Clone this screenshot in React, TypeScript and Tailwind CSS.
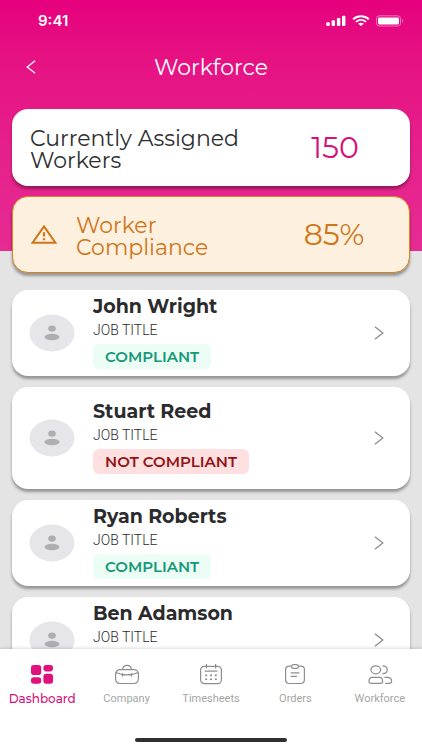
import React, { ReactNode } from "react";
import clsx from "clsx";

type Worker = {
  name: string;
  compliant: boolean;
  tall?: boolean;
};

const workers: Worker[] = [
  { name: "John Wright", compliant: true },
  { name: "Stuart Reed", compliant: false, tall: true },
  { name: "Ryan Roberts", compliant: true },
  { name: "Ben Adamson", compliant: true },
];

const SignalIcon = () => (
  <svg width="20" height="12" viewBox="0 0 20 12" fill="white">
    <rect x="0.3" y="7.3" width="3.4" height="3.7" rx="1" />
    <rect x="5.6" y="5.3" width="3.4" height="5.7" rx="1" />
    <rect x="10.9" y="3" width="3.4" height="8" rx="1" />
    <rect x="16" y="0.8" width="3.4" height="10.2" rx="1" />
  </svg>
);

const WifiIcon = () => (
  <svg width="18" height="12" viewBox="0 0 18 12" fill="none" stroke="white">
    <path d="M1.1 4.3C5.6 0.3 12.4 0.3 16.9 4.3" strokeWidth="2" />
    <path d="M4 6.9C6.9 4.3 11.1 4.3 14 6.9" strokeWidth="1.8" />
    <path d="M6.2 8.8C7.8 7.5 10.2 7.5 11.8 8.8L9 11Z" fill="white" stroke="none" />
  </svg>
);

const BatteryIcon = () => (
  <svg width="28" height="12" viewBox="0 0 28 12" fill="none">
    <rect x="0.5" y="0.8" width="24" height="10.2" rx="2.8" stroke="white" strokeOpacity="0.45" />
    <rect x="2" y="2.4" width="21" height="7" rx="1.4" fill="white" />
    <path d="M26 4.2C27.6 4.8 27.6 7 26 7.6Z" fill="white" fillOpacity="0.5" />
  </svg>
);

const ChevronIcon = ({ className }: { className?: string }) => (
  <svg
    className={className}
    width="10"
    height="14"
    viewBox="0 0 10 14"
    fill="none"
    stroke="currentColor"
    strokeWidth="1.3"
  >
    <path d="M0.9 0.7L8.8 7L0.9 13.3" />
  </svg>
);

const WarningIcon = () => (
  <svg width="28" height="20" viewBox="0 0 28 20" fill="none" stroke="#cf7618">
    <path d="M14 1.4L25.4 17.8H2.6Z" strokeWidth="2" strokeLinejoin="miter" />
    <path d="M14 7.2V11.4M14 13.2V15.2" strokeWidth="2.2" />
  </svg>
);

const DashboardIcon = () => (
  <svg width="24" height="22" viewBox="0 0 24 22" fill="#e0107c">
    <rect x="1" y="1" width="10.2" height="10" rx="2.8" />
    <rect x="13.4" y="1" width="9.6" height="6.4" rx="2.8" />
    <rect x="1" y="13.2" width="10.2" height="6.6" rx="2.8" />
    <rect x="13.4" y="9.8" width="9.6" height="10" rx="2.8" />
  </svg>
);

const CompanyIcon = () => (
  <svg width="26" height="22" viewBox="0 0 26 22" fill="none" stroke="#8e8e8e" strokeWidth="1.2">
    <rect x="1.6" y="5.7" width="22.8" height="13.8" rx="4.4" />
    <path d="M8.6 5.7C8.8 2.8 10.2 1.4 13 1.4S17.2 2.8 17.4 5.7" />
    <path d="M1.8 8.5C8 11.6 18 11.6 24.2 8.5M8.4 9.2V12.5M17.6 9.2V12.5" />
  </svg>
);

const TimesheetsIcon = () => (
  <svg width="26" height="22" viewBox="0 0 26 22" fill="none" stroke="#8e8e8e" strokeWidth="1.2">
    <rect x="2.6" y="2.3" width="20.8" height="17.3" rx="3.6" />
    <path d="M8.4 0V4.4M17.6 0V4.4M6.6 7.2H19.4" />
    <path
      d="M7.2 11.4H9.2M12 11.4H14M16.8 11.4H18.8M7.2 15.2H9.2M12 15.2H14M16.8 15.2H18.8"
      strokeWidth="1.6"
    />
  </svg>
);

const OrdersIcon = () => (
  <svg width="26" height="22" viewBox="0 0 26 22" fill="none" stroke="#8e8e8e" strokeWidth="1.2">
    <path d="M9.4 2.1H7.4C4.6 2.1 3.6 3.2 3.6 5.6V15.8C3.6 18.2 4.8 19.5 7.4 19.5H18.6C21.2 19.5 22.4 18.2 22.4 15.8V5.6C22.4 3.2 21.4 2.1 18.6 2.1H16.6" />
    <rect x="9.6" y="0.6" width="6.8" height="3.8" rx="1.9" />
    <path d="M8.6 8.8H17.4M8.6 12.4H15" />
  </svg>
);

const WorkforceIcon = () => (
  <svg width="26" height="22" viewBox="0 0 26 22" fill="none" stroke="#8e8e8e" strokeWidth="1.2">
    <ellipse cx="8.8" cy="5.8" rx="4.9" ry="4" />
    <path d="M15.4 1.9C18.6 1.9 20.2 3.6 20.2 5.8S18.6 9.7 15.4 9.7" />
    <path d="M5.2 13.3H12.4C14.4 13.3 15.6 15 15.6 17.2C15.6 18.6 14.8 19.3 13.4 19.3H4.2C2.8 19.3 2 18.6 2 17.2C2 15 3.2 13.3 5.2 13.3Z" />
    <path d="M17.4 13.3H20.6C23 13.3 24.6 15 24.6 17.2C24.6 18.6 23.8 19.3 22.4 19.3H18.2" />
  </svg>
);

const Avatar = () => (
  <svg className="shrink-0" width="46" height="38" viewBox="0 0 46 38">
    <ellipse cx="23" cy="19" rx="22.5" ry="18.5" fill="#e5e5ea" />
    <ellipse cx="23" cy="14.6" rx="3.8" ry="3.2" fill="#aeaeb2" />
    <ellipse cx="23" cy="23" rx="7.5" ry="3.3" fill="#aeaeb2" />
  </svg>
);

const StatCard = ({
  label,
  value,
  icon,
  warning,
}: {
  label: ReactNode;
  value: string;
  icon?: ReactNode;
  warning?: boolean;
}) => (
  <div
    className={clsx(
      "flex min-h-[77px] items-center rounded-2xl pl-[18px] shadow-[0px_3px_3px_0px_rgba(0,_0,_0,_0.35)]",
      warning
        ? "border border-[#d5851f] bg-[#fef0df] text-[#cf7618]"
        : "bg-white text-[#2f2f31]"
    )}
  >
    {icon && <span className="mr-[18px] -ml-px shrink-0">{icon}</span>}
    <h2 className="flex-1 pt-1 text-[22px] leading-[22px]">{label}</h2>
    <p
      className={clsx(
        "w-[150px] text-center text-3xl leading-8",
        !warning && "text-[#d3127a]"
      )}
    >
      {value}
    </p>
  </div>
);

const WorkerCard = ({ name, compliant, tall }: Worker) => (
  <li>
    <a
      href={`#${name}`}
      className={clsx(
        "flex items-center rounded-2xl bg-white pr-[26px] pl-[17px] shadow-[0px_3px_3px_0px_rgba(0,_0,_0,_0.35)]",
        tall ? "py-[15px]" : "py-[7px]"
      )}
    >
      <Avatar />
      <div className="ml-[18px] flex-1">
        <h3 className="text-[19px] leading-5 font-bold text-[#2b2b2d]">{name}</h3>
        <p className="mt-[3px] font-[Roboto,sans-serif] text-sm leading-5 font-light text-[#2b2b2d]">
          JOB TITLE
        </p>
        <span
          className={clsx(
            "mt-1 inline-block rounded-md px-3 align-top text-[15px] leading-[25px] font-semibold",
            compliant ? "bg-[#ecfdf5] text-[#149877]" : "bg-[#fee0e0] text-[#931216]"
          )}
        >
          {compliant ? "COMPLIANT" : "NOT COMPLIANT"}
        </span>
      </div>
      <ChevronIcon className="text-[#8e8e93]" />
    </a>
  </li>
);

const navItems = [
  { label: "Dashboard", icon: DashboardIcon },
  { label: "Company", icon: CompanyIcon },
  { label: "Timesheets", icon: TimesheetsIcon },
  { label: "Orders", icon: OrdersIcon },
  { label: "Workforce", icon: WorkforceIcon },
];

const BottomNav = () => (
  <nav className="relative shrink-0 bg-white pb-2 shadow-[0px_-1px_3px_0px_rgba(0,_0,_0,_0.15)]">
    <ul className="flex pt-[15px]">
      {navItems.map((item, index) => (
        <li key={item.label} className="flex-1 basis-0">
          <a href={`#${item.label}`} className="flex flex-col items-center gap-[5px]">
            <item.icon />
            <span
              className={clsx(
                "leading-4",
                index === 0
                  ? "text-xs font-medium text-[#d3127a]"
                  : "font-[Roboto,sans-serif] text-[11px] text-[#a6a6a6]"
              )}
            >
              {item.label}
            </span>
          </a>
        </li>
      ))}
    </ul>
    <div className="mx-auto mt-[31px] h-1 w-[36%] rounded-full bg-[#303030]" />
  </nav>
);

export default function App() {
  return (
    <div className="flex h-screen flex-col bg-[#e4e4e4] font-[Montserrat,Inter,sans-serif]">
      <main className="min-h-0 flex-1 overflow-y-auto [scrollbar-width:none]">
        <header className="flex flex-col bg-linear-to-b from-[#e6007e] to-[#e62b92] px-3">
          <div className="flex h-[42px] items-center justify-between pr-[6px] pl-[26px]">
            <span className="font-[Inter,sans-serif] text-[15px] font-semibold text-white">
              9:41
            </span>
            <div className="flex items-center gap-[6px]">
              <SignalIcon />
              <WifiIcon />
              <BatteryIcon />
            </div>
          </div>
          <div className="grid h-[50px] grid-cols-[1fr_auto_1fr] items-center text-white">
            <button
              type="button"
              aria-label="Back"
              className="cursor-pointer justify-self-start pl-[14px]"
            >
              <ChevronIcon className="rotate-180" />
            </button>
            <h1 className="text-[22px]">Workforce</h1>
          </div>
          <div className="mt-[17px] -mb-[22px] flex flex-col gap-[10px]">
            <StatCard
              label={
                <>
                  Currently Assigned
                  <br />
                  Workers
                </>
              }
              value="150"
            />
            <StatCard
              warning
              icon={<WarningIcon />}
              label={
                <>
                  Worker
                  <br />
                  Compliance
                </>
              }
              value="85%"
            />
          </div>
        </header>
        <ul className="mt-[39px] flex flex-col gap-[11px] px-3 pb-4">
          {workers.map((worker) => (
            <WorkerCard key={worker.name} {...worker} />
          ))}
        </ul>
      </main>
      <BottomNav />
    </div>
  );
}
